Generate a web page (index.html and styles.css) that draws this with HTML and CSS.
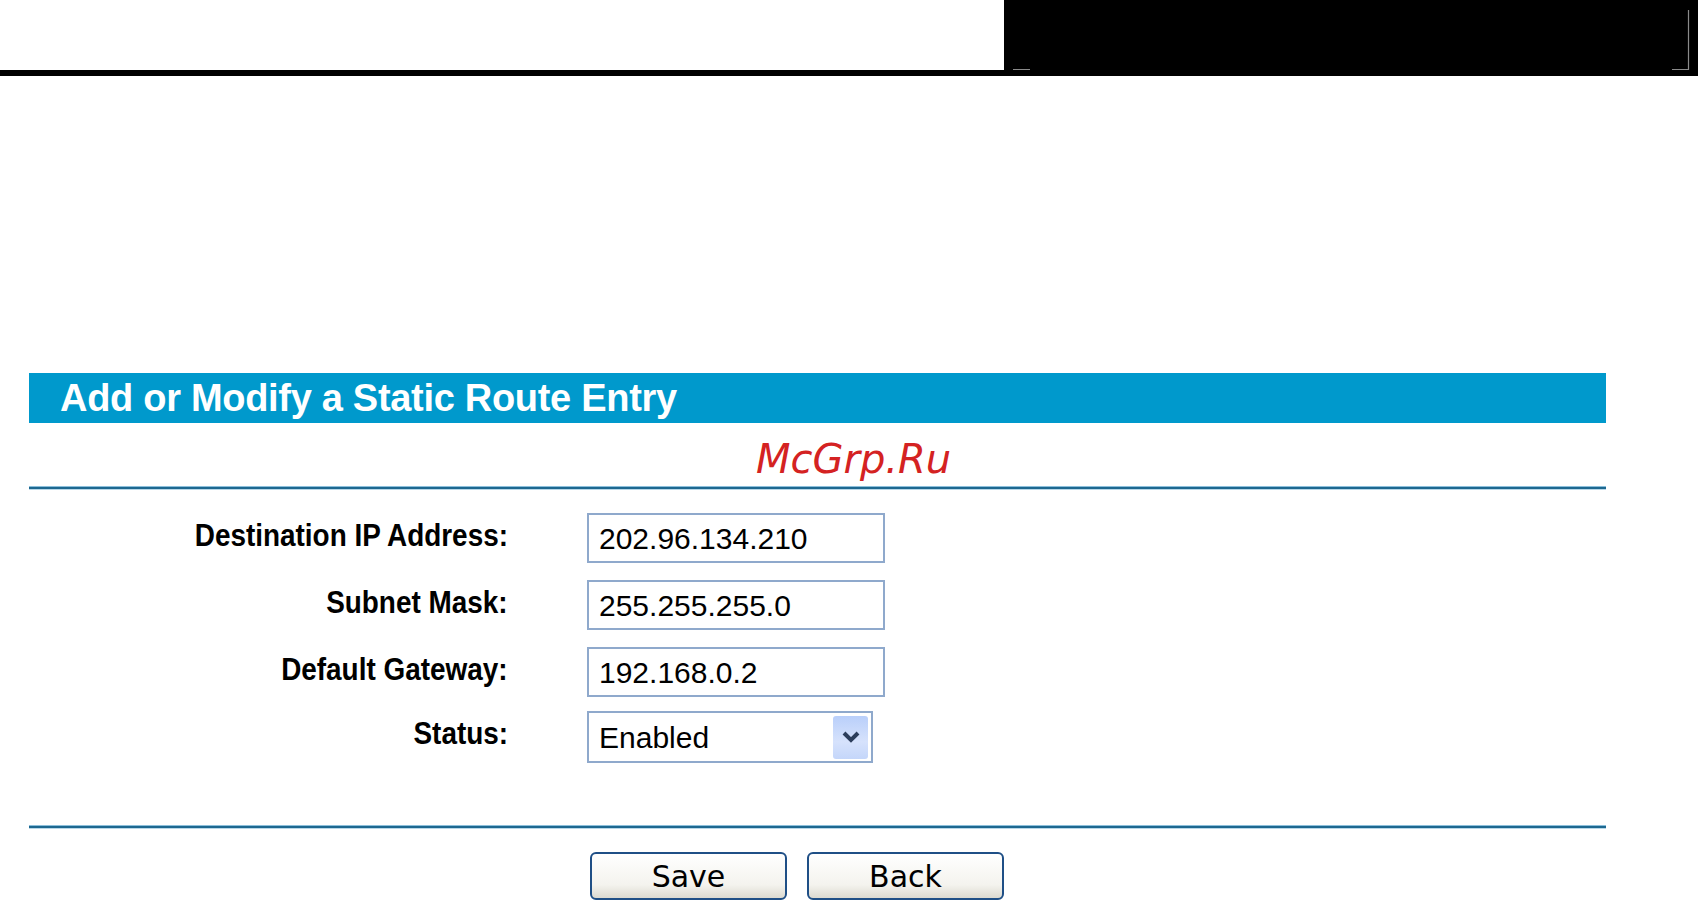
FILE: index.html
```html
<!DOCTYPE html>
<html lang="en">
<head>
    <meta charset="UTF-8">
    <title>Static Routing</title>
    <link rel="stylesheet" href="styles.css">
</head>
<body>
    <div class="topbar">
        <div class="topbar-blank"></div>
        <div class="topbar-dark">
            <svg width="694" height="76" viewBox="0 0 694 76">
                <path d="M9 69.5H26M668 69.5H684.5V10" fill="none" stroke="#8a8a8a" stroke-width="1.2"/>
            </svg>
        </div>
    </div>

    <div class="panel">
        <div class="panel-title">Add or Modify a Static Route Entry</div>
        <div class="watermark">McGrp.Ru</div>
        <div class="rule"></div>

        <div class="form">
            <div class="form-row">
                <label class="form-label" for="dest"><span>Destination IP Address:</span></label>
                <input class="text-field" id="dest" type="text" value="202.96.134.210">
            </div>
            <div class="form-row">
                <label class="form-label" for="mask"><span>Subnet Mask:</span></label>
                <input class="text-field" id="mask" type="text" value="255.255.255.0">
            </div>
            <div class="form-row">
                <label class="form-label" for="gateway"><span>Default Gateway:</span></label>
                <input class="text-field" id="gateway" type="text" value="192.168.0.2">
            </div>
            <div class="form-row">
                <label class="form-label"><span>Status:</span></label>
                <div class="select-box">
                    <span class="select-value">Enabled</span>
                    <span class="select-arrow">
                        <svg width="20" height="14" viewBox="0 0 20 14">
                            <path d="M3 3L10 10L17 3" fill="none" stroke="#2c3e5c" stroke-width="4"/>
                        </svg>
                    </span>
                </div>
            </div>
        </div>

        <div class="rule"></div>

        <div class="buttons">
            <button class="btn">Save</button>
            <button class="btn">Back</button>
        </div>
    </div>
</body>
</html>
```

FILE: styles.css
```css
body {
    margin: 0;
    padding: 0;
    background: #fff;
    font-family: 'Liberation Sans', Arial, sans-serif;
    color: #000;
}
.topbar {
    display: flex;
    height: 76px;
    background: #000;
}
.topbar-blank {
    width: 1004px;
    height: 70px;
    background: #fff;
}
.topbar-dark {
    flex: 1;
}
.topbar-dark svg {
    display: block;
}
.panel {
    margin: 297px 0 0 29px;
    width: 1577px;
}
.panel-title {
    height: 50px;
    line-height: 50px;
    background: #0099cc;
    color: #fff;
    font-weight: bold;
    font-size: 38px;
    padding-left: 31px;
    letter-spacing: -0.3px;
}
.watermark {
    height: 63px;
    padding-left: 727px;
    line-height: 72px;
    font-family: 'DejaVu Sans', sans-serif;
    font-style: italic;
    font-size: 40px;
    color: #d42222;
}
.rule {
    height: 4px;
    background: linear-gradient(#8cbfdb 0, #8cbfdb 25%, #1d6890 25%, #1d6890 75%, #b8d7e8 75%);
}
.form {
    padding: 23px 0 62px;
    display: flex;
    flex-direction: column;
    gap: 17px;
}
.form-row {
    display: grid;
    grid-template-columns: 479px auto;
    column-gap: 79px;
    align-items: start;
}
.form-row:nth-child(4) {
    margin-top: -3px;
}
.form-label {
    text-align: right;
    font-weight: bold;
    font-size: 31px;
    line-height: 32px;
    padding-top: 7px;
}
/* the router UI font is narrower than Arial */
.form-label span {
    display: inline-block;
    transform: scaleX(0.9);
    transform-origin: right center;
}
.text-field {
    box-sizing: border-box;
    width: 298px;
    height: 50px;
    margin: 0;
    padding: 2px 10px 0;
    border: 2px solid #8fa9cc;
    font-family: 'Liberation Sans', Arial, sans-serif;
    font-size: 30px;
    color: #000;
    outline: none;
}
.select-box {
    box-sizing: border-box;
    width: 286px;
    height: 52px;
    border: 2px solid #8fa9cc;
    display: flex;
    align-items: center;
    justify-content: space-between;
    padding: 0 3px 0 10px;
}
.select-value {
    font-size: 30px;
    padding-top: 2px;
}
.select-arrow {
    width: 35px;
    height: 43px;
    box-sizing: border-box;
    border-radius: 3px;
    background: linear-gradient(#b9cffa, #d6e2fc 60%, #c4d6fa);
    display: flex;
    align-items: center;
    justify-content: center;
}
.select-arrow svg {
    display: block;
}
.buttons {
    display: flex;
    gap: 20px;
    padding: 23px 0 0 561px;
}
.btn {
    box-sizing: border-box;
    width: 197px;
    height: 48px;
    border: 2px solid #1f4f86;
    border-radius: 6px;
    background: linear-gradient(#ffffff, #f4f3ee 70%, #dcdad0);
    font-family: 'DejaVu Sans', Verdana, sans-serif;
    font-size: 30px;
    color: #000;
    padding: 0;
    cursor: pointer;
}
```
